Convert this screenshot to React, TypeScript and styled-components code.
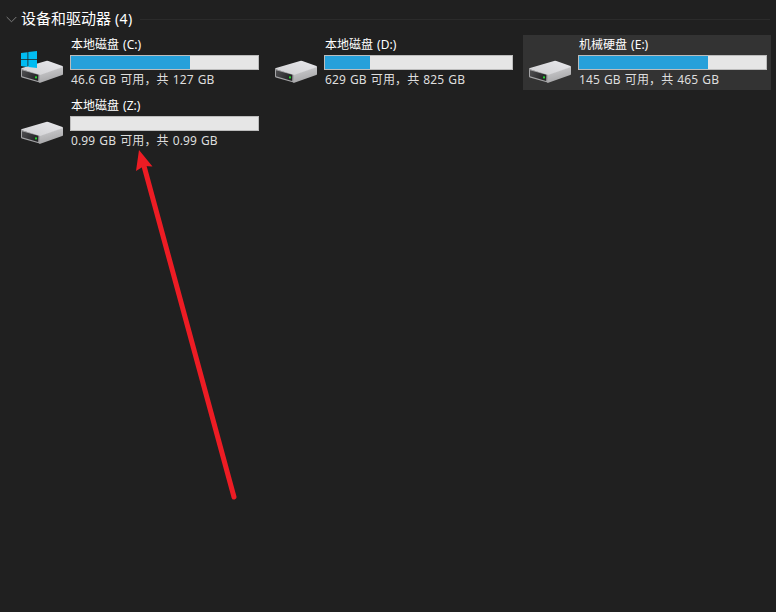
import React from "react";
import styled, { createGlobalStyle } from "styled-components";

const GlobalStyle = createGlobalStyle`
  * { box-sizing: border-box; }
  body { margin: 0; background: #202020; }
`;

const Pane = styled.main`
  position: relative;
  width: 776px;
  height: 612px;
  overflow: hidden;
  background: #202020;
  color: #fff;
  font-family: "Noto Sans", "Noto Sans CJK SC", sans-serif;
  font-size: 12px;
`;

const GroupHeader = styled.header`
  display: flex;
  align-items: center;
  height: 35px;
  padding: 3px 6px 0 6px;
`;

const Chevron = styled.svg`
  width: 11px;
  height: 7px;
  margin-right: 4px;
  flex: none;
`;

const GroupTitle = styled.h1`
  margin: 0 0 2px;
  font-size: 15px;
  font-weight: 400;
  line-height: 20px;
  white-space: nowrap;
`;

const Count = styled.span`
  font-size: 14px;
  letter-spacing: 0.5px;
`;

const Rule = styled.div`
  flex: 1;
  height: 1px;
  margin-left: 7px;
  background: #2b2b2b;
`;

const DriveGrid = styled.section`
  display: grid;
  grid-template-columns: repeat(3, 248px);
  grid-auto-rows: 55px;
  gap: 6px;
  padding-left: 15px;
`;

const Tile = styled.article<{ $hovered?: boolean }>`
  display: flex;
  padding-left: 6px;
  background: ${(p) => (p.$hovered ? "#333333" : "transparent")};
`;

const IconSlot = styled.svg`
  width: 44px;
  height: 34px;
  margin: 16px 5px 0 0;
  flex: none;
`;

const Details = styled.div`
  display: flex;
  flex-direction: column;
  width: 189px;
`;

const Name = styled.div`
  height: 20px;
  padding-left: 1px;
  line-height: 20px;
  word-spacing: 1px;
  white-space: nowrap;
`;

const Meter = styled.div`
  height: 15px;
  border: 1px solid #bcbcbc;
  background: #e6e6e6;
`;

const Fill = styled.div<{ $width: number }>`
  width: ${(p) => p.$width}px;
  height: 100%;
  background: #26a0da;
`;

const Capacity = styled.div`
  height: 20px;
  padding-left: 1px;
  color: #dedede;
  line-height: 20px;
  letter-spacing: 0.12px;
  word-spacing: 0.8px;
  white-space: nowrap;
`;

const Arrow = styled.svg`
  position: absolute;
  left: 0;
  top: 0;
  width: 776px;
  height: 612px;
  pointer-events: none;
`;

function DriveIcon({ system, id }: { system?: boolean; id: string }) {
  return (
    <IconSlot viewBox="0 0 44 34">
      <defs>
        <linearGradient id={`top-${id}`} x1="0" y1="1" x2="1" y2="0">
          <stop offset="0" stopColor="#cfcfd1" />
          <stop offset="1" stopColor="#e8e8ec" />
        </linearGradient>
        <linearGradient id={`side-${id}`} x1="0" y1="0" x2="0.3" y2="1">
          <stop offset="0" stopColor="#d2d2d4" />
          <stop offset="1" stopColor="#a6a6a8" />
        </linearGradient>
        <linearGradient id={`bay-${id}`} x1="0" y1="0" x2="1" y2="0.4">
          <stop offset="0" stopColor="#505052" />
          <stop offset="1" stopColor="#242426" />
        </linearGradient>
      </defs>
      <path d="M0 18 L19 23.5 L18.6 31.5 L0.8 26.4 Q0 26 0 25.2Z" fill="#a4a4a6" />
      <path d="M18.8 23.2 L42 15.5 V23 Q42 23.8 41.2 24.1 L20 31.6 Q19 32 18 31.5Z" fill={`url(#side-${id})`} />
      <path d="M0 18 Q0 17.4 1 17 L25 10 Q26.2 9.7 27.4 10.1 L41.4 14.9 Q42.4 15.6 41.4 16.2 L19 24 Z" fill={`url(#top-${id})`} />
      <path d="M1 19.2 L17.4 23.8 L17.2 30 L1 25.2Z" fill={`url(#bay-${id})`} />
      <rect x="14" y="25.4" width="2" height="2" fill="#25d32f" />
      {system && (
        <path
          d="M0 2 L6.5 1.2 V8 H0Z M7.3 1.1 L16 0 V8 H7.3Z M0 8.8 H6.5 V15.9 L0 15Z M7.3 8.8 H16 V17 L7.3 16Z"
          fill="#00bcf2"
        />
      )}
    </IconSlot>
  );
}

const drives = [
  { id: "c", name: "本地磁盘 (C:)", capacity: "46.6 GB 可用，共 127 GB", fill: 119, system: true },
  { id: "d", name: "本地磁盘 (D:)", capacity: "629 GB 可用，共 825 GB", fill: 45 },
  { id: "e", name: "机械硬盘 (E:)", capacity: "145 GB 可用，共 465 GB", fill: 129, hovered: true },
  { id: "z", name: "本地磁盘 (Z:)", capacity: "0.99 GB 可用，共 0.99 GB", fill: 0 },
];

export default function App() {
  return (
    <Pane lang="zh-CN">
      <GlobalStyle />
      <GroupHeader>
        <Chevron viewBox="0 0 11 7">
          <path d="M0.7 1 L5.5 5.8 L10.3 1" fill="none" stroke="#7e7e7e" strokeWidth="1" />
        </Chevron>
        <GroupTitle>
          设备和驱动器 <Count>(4)</Count>
        </GroupTitle>
        <Rule />
      </GroupHeader>
      <DriveGrid>
        {drives.map((d) => (
          <Tile key={d.id} $hovered={d.hovered}>
            <DriveIcon id={d.id} system={d.system} />
            <Details>
              <Name>{d.name}</Name>
              <Meter>
                <Fill $width={d.fill} />
              </Meter>
              <Capacity>{d.capacity}</Capacity>
            </Details>
          </Tile>
        ))}
      </DriveGrid>
      <Arrow viewBox="0 0 776 612">
        <path d="M144 166 L234 497" stroke="#ed1c24" strokeWidth="5" strokeLinecap="round" />
        <path d="M139 150 L152.5 166.5 L144 166 L136 171Z" fill="#ed1c24" />
      </Arrow>
    </Pane>
  );
}
